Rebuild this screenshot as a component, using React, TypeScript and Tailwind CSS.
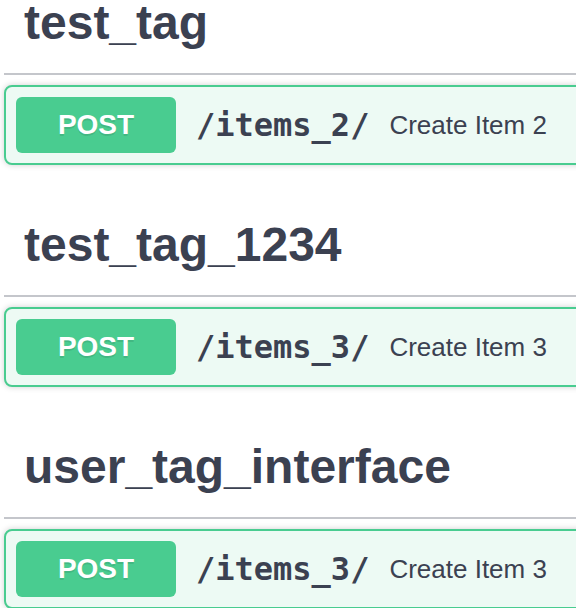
const sections = [
  { tag: 'test_tag', path: '/items_2/', summary: 'Create Item 2' },
  { tag: 'test_tag_1234', path: '/items_3/', summary: 'Create Item 3' },
  { tag: 'user_tag_interface', path: '/items_3/', summary: 'Create Item 3' },
]

const sans = "font-['Liberation_Sans',Arial,sans-serif]"

function OpBlock({ path, summary }: { path: string; summary: string }) {
  return (
    <div className="mb-[30px] rounded-[8px] border-2 border-[#49cc90] bg-[#edfaf4] shadow-[0_0_6px_rgba(0,0,0,0.19)]">
      <div className="flex items-center p-[10px]">
        <div
          className={`${sans} w-[160px] shrink-0 rounded-[6px] bg-[#49cc90] py-[12px] text-center text-[28px] leading-[32px] font-bold text-white [text-shadow:0_2px_0_rgba(0,0,0,0.1)]`}
        >
          POST
        </div>
        <span className="px-[20px] font-['DejaVu_Sans_Mono',monospace] text-[32px] leading-[40px] font-bold text-[#3b4151]">
          {path}
        </span>
        <span className={`${sans} text-[26px] leading-[32px] text-[#3b4151]`}>{summary}</span>
      </div>
    </div>
  )
}

export default function App() {
  return (
    <div className="h-[608px] w-[576px] overflow-hidden bg-white">
      <div className="-mt-[27px] ml-[4px] w-[640px]">
        {sections.map((s, i) => (
          <div key={i}>
            <div className="mb-[10px] border-b-2 border-[#c4c6cb] py-[20px] pr-[40px] pl-[20px]">
              <h3 className={`${sans} text-[48px] leading-[60px] font-bold text-[#3b4151]`}>{s.tag}</h3>
            </div>
            <OpBlock path={s.path} summary={s.summary} />
          </div>
        ))}
      </div>
    </div>
  )
}
